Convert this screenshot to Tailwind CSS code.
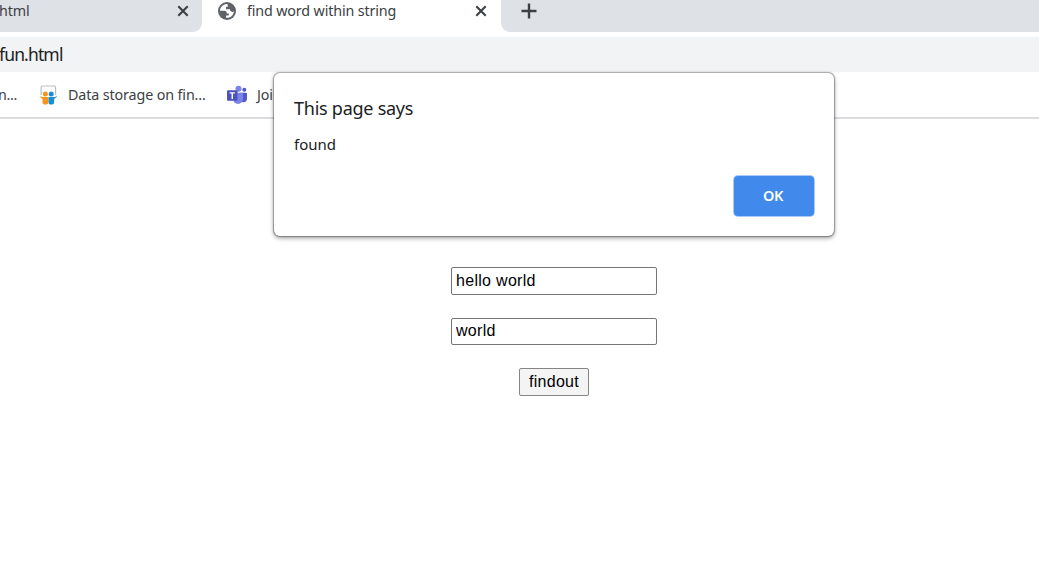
<!DOCTYPE html>
<html lang="en">
<head>
<meta charset="utf-8">
<title>find word within string</title>
<script src="https://cdn.jsdelivr.net/npm/@tailwindcss/browser@4"></script>
</head>
<body class="relative flex h-screen flex-col overflow-hidden bg-white font-['Noto_Sans',sans-serif] text-[#3c4043]">
  <header class="shrink-0">
    <div class="flex h-[37px] items-start">
      <div class="flex h-8 w-[202px] items-start justify-between rounded-br-[9px] bg-[#dee1e6] pr-[13px]">
        <span class="-ml-px text-[14.3px] leading-[22px] tracking-[-0.15px]">html</span>
        <svg class="mt-[5px] size-3" viewBox="0 0 12 12" fill="none" stroke="#3c4043" stroke-width="2.1"><path d="M1.300 1.300l9.400 9.400M10.700 1.300l-9.400 9.400"/></svg>
      </div>
      <div class="flex h-8 w-[299px] items-start pl-[15px] pr-[14px]">
        <svg class="mt-px size-5" viewBox="0 0 20 20"><circle cx="10" cy="10" r="9" fill="#5f6368"/><path d="M10.400 3C7 2.700 3 5.700 3 9.800h4.300c1.800 0 2.500 1 2.500 2.600h2v2.100H9.100v2.300c4.200.6 7.600-2.600 7.800-6.500-1 .9-2.600.8-3.400-.2-.6-.8-.5-1.800-.5-1.800H9V5.800h2z" fill="#fff"/></svg>
        <span class="ml-[10px] whitespace-nowrap text-[14.3px] leading-[22px] tracking-[-0.14px]">find word within string</span>
        <svg class="ml-auto mt-[5px] size-3" viewBox="0 0 12 12" fill="none" stroke="#3c4043" stroke-width="2.1"><path d="M1.300 1.300l9.400 9.400M10.700 1.300l-9.400 9.400"/></svg>
      </div>
      <div class="h-8 flex-1 rounded-bl-[9px] bg-[#dee1e6] pl-5 pt-[3px]">
        <svg class="size-4" viewBox="0 0 16 16" fill="none" stroke="#3c4043" stroke-width="2.4"><path d="M8 .5v15M.5 8h15"/></svg>
      </div>
    </div>
    <div class="h-[35px] bg-[#f1f3f4] text-[17.5px] leading-[35px] tracking-[-0.85px] text-[#202124]"><span class="-ml-px">fun.html</span></div>
    <nav class="flex h-[47px] items-center border-b-2 border-[#dadce0] text-[14.3px] tracking-[-0.12px]">
      <span class="-ml-[2px] w-[41px] whitespace-nowrap tracking-[-0.35px]">n...</span>
      <svg class="size-5" viewBox="0 0 20 20"><path d="M2.100 10V2.400Q2.100 1 3.500 1h11.700q1.400 0 1.400 1.400V10" fill="#fff" stroke="#b9bec3" stroke-width="1.200"/><circle cx="6.400" cy="9" r="2.500" fill="#f79421"/><circle cx="12.200" cy="9" r="2.500" fill="#168fd0"/><path d="M.4 10.700c2.300 1.700 4.800 1.400 8.800 1.400v5.600c0 2.200-4.700 2.500-5.500.6-.5-1.300.2-3.200-.3-4.200C2.400 12.900.9 12.100.4 10.700z" fill="#f79421"/><path d="M18.300 10.700c-2.300 1.700-4.800 1.400-8.800 1.400v5.600c0 2.200 4.700 2.500 5.500.6.5-1.300-.2-3.200.3-4.200.7-1.200 2.500-2 3-3.400z" fill="#168fd0"/></svg>
      <span class="ml-[9px] w-[158px] whitespace-nowrap">Data storage on fin...</span>
      <svg class="size-[22px]" viewBox="0 0 22 22"><circle cx="18.300" cy="5.800" r="2" fill="#5059c9"/><path d="M14 8.800h6q1 0 1 1v5a3.700 3.700 0 0 1-7 1.500z" fill="#5059c9"/><circle cx="12.500" cy="4.700" r="3" fill="#7b83eb"/><path d="M8 8.800h8q1 0 1 1v5.200a5 5 0 0 1-10 0V9.800z" fill="#7b83eb"/><rect x="1" y="6.200" width="10.500" height="10.500" rx="1" fill="#4b53bc"/><path d="M3.600 8.900h5.300M6.250 8.900v6" stroke="#fff" stroke-width="1.400"/></svg>
      <span class="ml-[9px] whitespace-nowrap">Join</span>
    </nav>
  </header>
  <main class="flex flex-1 flex-col items-center pl-[69px] pt-[148px] font-['Liberation_Sans',sans-serif] text-base text-black">
    <input class="h-7 w-[206px] rounded-[2px] border border-[#767676] bg-white px-1 py-0 tracking-[0.3px]" value="hello world">
    <input class="mt-[23px] h-[27px] w-[206px] rounded-[2px] border border-[#767676] bg-white px-1 pb-[2px] pt-0 tracking-[0.3px]" value="world">
    <button class="mt-[23px] h-7 w-[70px] rounded-[2px] border border-[#858585] bg-[#f4f4f4] leading-[24px] tracking-[0.3px]">findout</button>
  </main>
  <section role="dialog" class="absolute left-[274px] top-[73px] flex h-[163px] w-[560px] flex-col rounded-[6px] bg-white px-5 pt-[22px] text-[#202124] shadow-[0_0_1px_0.5px_rgba(0,0,0,0.3),0_2px_5px_rgba(0,0,0,0.4)]">
    <h1 class="text-[18px] leading-[26px] tracking-[-0.25px]">This page says</h1>
    <p class="mt-3 text-[15px] leading-[22px]">found</p>
    <button class="ml-auto mt-[21px] h-10 w-20 rounded-[4px] bg-[#4189ea] pr-[2px] text-[14.5px] font-semibold tracking-[-0.4px] text-white shadow-[0_0_0_1px_#abcafa]">OK</button>
  </section>
</body>
</html>
